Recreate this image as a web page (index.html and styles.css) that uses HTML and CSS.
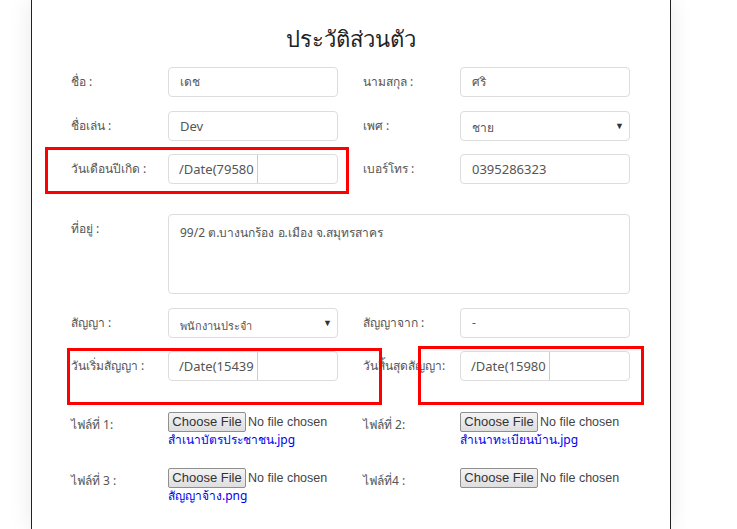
FILE: index.html
```html
<!DOCTYPE html>
<html lang="th">
<head>
<meta charset="utf-8">
<link rel="stylesheet" href="styles.css">
</head>
<body>
<div class="panel">
  <h1 class="title">ประวัติส่วนตัว</h1>
  <div class="form">
    <div class="row r1">
      <label class="lbl">ชื่อ :</label>
      <div class="field">เดช</div>
      <span></span>
      <label class="lbl">นามสกุล :</label>
      <div class="field">ศริ</div>
    </div>
    <div class="row r2">
      <label class="lbl">ชื่อเล่น :</label>
      <div class="field latin">Dev</div>
      <span></span>
      <label class="lbl">เพศ :</label>
      <div class="field select"><span class="sel-text">ชาย</span><span class="arrow">▼</span></div>
    </div>
    <div class="row r3">
      <label class="lbl">วันเดือนปีเกิด :</label>
      <div class="field date"><span class="date-val">/Date(79580</span><span class="date-rest"></span></div>
      <span></span>
      <label class="lbl">เบอร์โทร :</label>
      <div class="field latin">0395286323</div>
    </div>
    <div class="row r4">
      <label class="lbl">ที่อยู่ :</label>
      <div class="field area">99/2 ต.บางนกร้อง อ.เมือง จ.สมุทรสาคร</div>
    </div>
    <div class="row r5">
      <label class="lbl">สัญญา :</label>
      <div class="field select"><span class="sel-text small">พนักงานประจำ</span><span class="arrow">▼</span></div>
      <span></span>
      <label class="lbl">สัญญาจาก :</label>
      <div class="field">-</div>
    </div>
    <div class="row r6">
      <label class="lbl">วันเริ่มสัญญา :</label>
      <div class="field date"><span class="date-val">/Date(15439</span><span class="date-rest"></span></div>
      <span></span>
      <label class="lbl">วันสิ้นสุดสัญญา:</label>
      <div class="field date"><span class="date-val">/Date(15980</span><span class="date-rest"></span></div>
    </div>
    <div class="row r7">
      <label class="lbl flbl">ไฟล์ที่ 1:</label>
      <div class="filebox">
        <div class="fileinput"><span class="fbtn">Choose File</span><span class="fnone">No file chosen</span></div>
        <a class="flink">สำเนาบัตรประชาชน.jpg</a>
      </div>
      <span></span>
      <label class="lbl flbl">ไฟล์ที่ 2:</label>
      <div class="filebox">
        <div class="fileinput"><span class="fbtn">Choose File</span><span class="fnone">No file chosen</span></div>
        <a class="flink">สำเนาทะเบียนบ้าน.jpg</a>
      </div>
    </div>
    <div class="row r8">
      <label class="lbl flbl">ไฟล์ที่ 3 :</label>
      <div class="filebox">
        <div class="fileinput"><span class="fbtn">Choose File</span><span class="fnone">No file chosen</span></div>
        <a class="flink">สัญญาจ้าง.png</a>
      </div>
      <span></span>
      <label class="lbl flbl">ไฟล์ที่4 :</label>
      <div class="filebox">
        <div class="fileinput"><span class="fbtn">Choose File</span><span class="fnone">No file chosen</span></div>
      </div>
    </div>
  </div>
  <div class="mark m1"></div>
  <div class="mark m2"></div>
  <div class="mark m3"></div>
</div>
</body>
</html>
```
FILE: styles.css
```css
html, body {
  margin: 0;
  padding: 0;
  background: #ffffff;
}
body {
  font-family: "Noto Sans", "Liberation Sans", sans-serif;
  height: 529px;
  overflow: hidden;
}
.panel {
  position: relative;
  margin-left: 31px;
  width: 638px;
  height: 511px;
  border-left: 1px solid #222;
  border-right: 1px solid #222;
  background: #fff;
  box-shadow: 0 0 22px rgba(0, 0, 0, 0.09);
  padding-top: 18px;
  box-sizing: content-box;
}
.title {
  margin: 0 0 9px 0;
  height: 40px;
  line-height: 40px;
  font-size: 22px;
  font-weight: normal;
  text-align: center;
  color: #222;
}
.form {
  display: flex;
  flex-direction: column;
  padding-left: 39px;
}
.row {
  display: grid;
  grid-template-columns: 97px 170px 25px 97px 170px;
  align-items: start;
}
.r2 { margin-top: 14px; }
.r3 { margin-top: 13px; }
.r4 { margin-top: 30px; grid-template-columns: 97px 462px; }
.r5 { margin-top: 14px; }
.r6 { margin-top: 13px; }
.r7 { margin-top: 31px; }
.r8 { margin-top: 20px; }
.lbl {
  font-size: 12px;
  line-height: 16px;
  padding-top: 7px;
  color: #555;
  white-space: nowrap;
}
.flbl { padding-top: 5px; }
.field {
  box-sizing: border-box;
  height: 30px;
  border: 1px solid #ddd;
  border-radius: 4px;
  padding: 0 11px;
  font-size: 12px;
  line-height: 28px;
  color: #555;
  white-space: nowrap;
  overflow: hidden;
}
.latin { font-size: 13px; }
.select {
  display: flex;
  justify-content: space-between;
  align-items: center;
  padding-right: 5px;
}
.sel-text { padding-top: 4px; }
.sel-text.small { font-size: 11px; padding-top: 6px; }
.arrow { font-size: 9px; color: #333; }
.date {
  display: flex;
  padding: 0;
}
.date-val {
  width: 89px;
  box-sizing: border-box;
  padding-left: 10px;
  font-size: 13px;
  overflow: hidden;
  border-right: 1px solid #ccc;
  color: #555;
}
.date-rest { flex: 1; }
.area {
  grid-column: 2;
  height: 80px;
  white-space: normal;
  line-height: 16px;
  padding-top: 10px;
}
.filebox {
  display: flex;
  flex-direction: column;
}
.row .filebox:last-child { grid-column: 5; }
.fileinput {
  display: flex;
  align-items: center;
  font-family: "Liberation Sans", Arial, sans-serif;
  font-size: 12.5px;
  white-space: nowrap;
}
.fbtn {
  box-sizing: border-box;
  width: 78px;
  text-align: center;
  height: 20px;
  line-height: 17px;
  padding: 0;
  border: 1px solid #8f8f8f;
  border-radius: 2px;
  background: linear-gradient(#f4f4f4, #dedede);
  color: #333;
  font-size: 13px;
}
.fnone {
  margin-left: 2px;
  color: #444;
}
.flink {
  font-size: 12px;
  line-height: 16px;
  color: #0000ee;
}
.mark {
  position: absolute;
  border: 3px solid #ff0000;
  box-sizing: border-box;
}
.m1 { left: 13px; top: 147px; width: 304px; height: 47px; }
.m2 { left: 35px; top: 348px; width: 315px; height: 57px; }
.m3 { left: 386px; top: 346px; width: 226px; height: 59px; }
```
